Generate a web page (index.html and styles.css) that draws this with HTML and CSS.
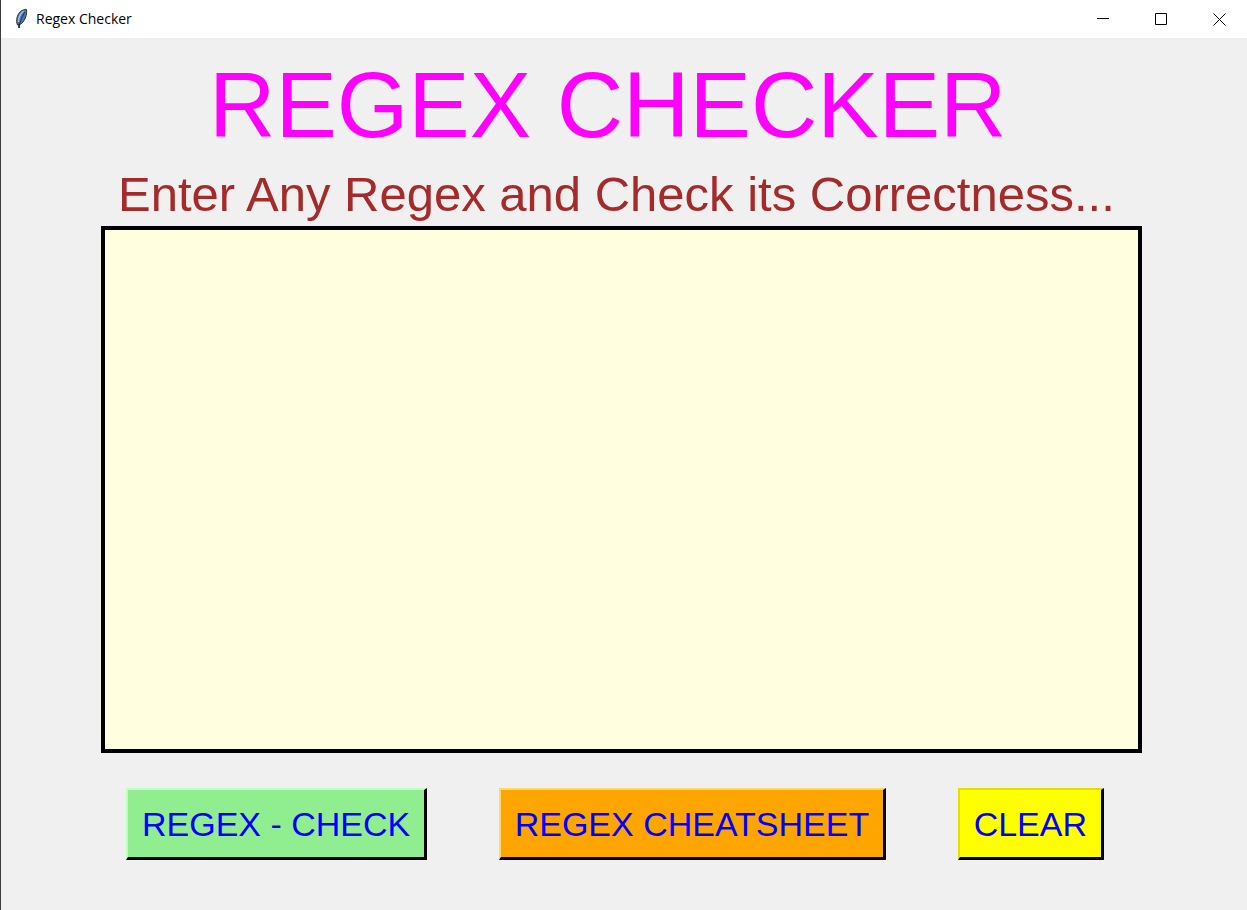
FILE: index.html
```html
<!DOCTYPE html>
<html lang="en">
<head>
<meta charset="utf-8">
<title>Regex Checker</title>
<link rel="stylesheet" href="styles.css">
</head>
<body>
<div class="window">
  <header class="titlebar">
    <svg class="app-icon" viewBox="0 0 16 22" aria-hidden="true">
      <path d="M4.500 17C2.500 13 4 5 9 2.500c2-1 4-1.500 4.500-1 .8 3-.5 9-3.500 12.500-1.500 2-3.500 3-5.500 3z" fill="#4a76a8" stroke="#2b3440" stroke-width="1"/>
      <path d="M10.500 3C7 6 5.500 10 5.500 14" fill="none" stroke="#a3c2e2" stroke-width="1.500"/>
      <path d="M12 4C9.500 8 7 12 6 20" fill="none" stroke="#25303d" stroke-width="1"/>
      <path d="M6 16v4" fill="none" stroke="#222" stroke-width="1.500"/>
    </svg>
    <span class="caption">Regex Checker</span>
    <div class="controls">
      <button class="control" type="button" aria-label="Minimize"><svg class="glyph" viewBox="0 0 13 13"><path d="M0 5.500h12"/></svg></button>
      <button class="control" type="button" aria-label="Maximize"><svg class="glyph" viewBox="0 0 13 13"><path d="M.5.5h11v11H.5z"/></svg></button>
      <button class="control" type="button" aria-label="Close"><svg class="glyph" viewBox="0 0 13 13"><path d="M.5.5l12 12M12.500.5l-12 12"/></svg></button>
    </div>
  </header>
  <main class="content">
    <h1 class="title">REGEX CHECKER</h1>
    <label class="subtitle" for="regex">Enter Any Regex and Check its Correctness...</label>
    <textarea class="editor" id="regex" spellcheck="false"></textarea>
    <div class="actions">
      <button class="action check" type="button">REGEX - CHECK</button>
      <button class="action cheatsheet" type="button">REGEX CHEATSHEET</button>
      <button class="action clear" type="button">CLEAR</button>
    </div>
  </main>
</div>
</body>
</html>
```
FILE: styles.css
```css
* { box-sizing: border-box; }
body { margin: 0; background: #f0f0f0; font-family: "Liberation Sans", Arial, sans-serif; }
.window { display: flex; flex-direction: column; min-height: 100vh; border-left: 1px solid #3c3c3c; }
.titlebar { display: flex; align-items: center; height: 38px; padding-left: 12px; background: #fff; }
.app-icon { width: 16px; height: 22px; margin-right: 7px; }
.caption { padding-bottom: 2px; font-family: "Open Sans", "Noto Sans", sans-serif; font-size: 14px; color: #000; }
.controls { display: flex; align-self: stretch; margin-left: auto; }
.control { display: grid; place-items: center; width: 58px; padding: 0 0 0 2px; border: 0; background: none; }
.glyph { width: 13px; height: 13px; fill: none; stroke: #000; stroke-width: 1; }
.content { display: flex; flex: 1; flex-direction: column; padding: 12px 105px 50px 100px; }
.title { margin: 0 0 0 108px; font-size: 92px; font-weight: 400; line-height: 110px; color: #f0f; white-space: nowrap; }
.subtitle { padding-top: 2px; margin-left: 17px; font-size: 49px; line-height: 64px; color: #a52a2a; white-space: nowrap; }
.editor { display: block; flex: 1; width: 100%; padding: 8px; border: 4px solid #000; border-radius: 0; outline: 0; resize: none; background: #ffffe0; font: 32px "Liberation Sans", Arial, sans-serif; }
.actions { display: flex; justify-content: space-between; margin-top: 35px; padding: 0 38px 0 25px; }
.action { height: 72px; padding: 2px 14px 0; border: 3px solid #000; border-width: 2px 3px 3px 2px; font: 34px "Liberation Sans", Arial, sans-serif; color: #00f; white-space: nowrap; }
.check { background: #90ee90; border-color: #bfffbf #000 #000 #bfffbf; }
.cheatsheet { background: #ffa500; border-color: #ffd966 #000 #000 #ffd966; }
.clear { background: #ff0; border-color: #e0e000 #000 #000 #e0e000; }
```
